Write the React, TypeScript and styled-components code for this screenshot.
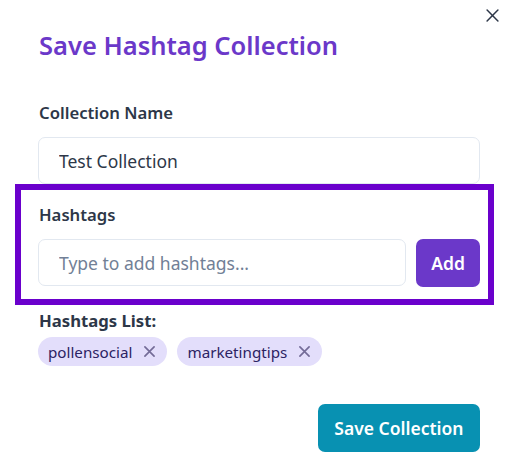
import React from "react";
import styled, { createGlobalStyle } from "styled-components";

const GlobalStyle = createGlobalStyle`
    html, body {
        margin: 0;
        padding: 0;
        background: #ffffff;
    }

    body {
        font-family: "Noto Sans", "Open Sans", sans-serif;
        color: #2d3748;
    }
`;

const Modal = styled.div`
    position: relative;
    width: 513px;
    height: 460px;
    box-sizing: border-box;
    padding: 27px 33px 0 38px;
    display: flex;
    flex-direction: column;
    background: #ffffff;
`;

const CloseButton = styled.button`
    position: absolute;
    top: 3px;
    right: 9px;
    width: 24px;
    height: 24px;
    padding: 0;
    display: flex;
    align-items: center;
    justify-content: center;
    border: none;
    background: transparent;
    color: #2d3748;
    cursor: pointer;
`;

const Title = styled.h2`
    margin: 0 0 39px 1px;
    font-size: 25.5px;
    line-height: 36px;
    font-weight: 600;
    color: #6b38c9;
`;

const Field = styled.div`
    display: flex;
    flex-direction: column;
`;

const Label = styled.label<{ $bold?: boolean }>`
    margin: 0 0 ${props => (props.$bold ? "5px" : "13px")} 1px;
    font-size: 16.7px;
    line-height: 22px;
    font-weight: ${props => (props.$bold ? 700 : 600)};
    color: #2d3748;
`;

const TextInput = styled.input`
    flex: 1 1 auto;
    min-width: 0;
    height: 47px;
    box-sizing: border-box;
    padding: 0 20px;
    border: 1px solid #e2e8f0;
    border-radius: 7px;
    font-family: inherit;
    font-size: 17.5px;
    color: #2d3748;
    background: #ffffff;
    outline: none;

    &::placeholder {
        color: #718096;
    }
`;

const Highlight = styled.section`
    margin: 0 -14px 0 -23px;
    padding: 14px 8px 12px 17px;
    border: 6px solid #6a00cc;
    display: flex;
    flex-direction: column;
`;

const InputRow = styled.div`
    display: flex;
    gap: 10px;
`;

const Button = styled.button<{ $tone: "purple" | "teal" }>`
    height: 48px;
    padding: 0 ${props => (props.$tone === "teal" ? "16.5px" : "15px")};
    border: none;
    border-radius: 7px;
    font-family: inherit;
    font-size: 17.5px;
    font-weight: 600;
    color: #ffffff;
    background: ${props => (props.$tone === "teal" ? "#0891b2" : "#6b38c9")};
    cursor: pointer;
`;

const ListSection = styled.div`
    margin-top: 5px;
    display: flex;
    flex-direction: column;
`;

const Chips = styled.div`
    display: flex;
    flex-wrap: wrap;
    gap: 10px;
`;

const Chip = styled.span`
    height: 29px;
    box-sizing: border-box;
    padding: 0 11px 0 10px;
    display: inline-flex;
    align-items: center;
    gap: 10px;
    border-radius: 15px;
    background: #e3defb;
    color: #2c2363;
    font-size: 15.2px;
`;

const ChipRemove = styled.button`
    width: 14px;
    height: 14px;
    padding: 0;
    display: flex;
    align-items: center;
    justify-content: center;
    border: none;
    background: transparent;
    color: #736b97;
    cursor: pointer;
`;

const Footer = styled.div`
    margin-top: 38px;
    display: flex;
    justify-content: flex-end;
`;

const Cross = ({ size, stroke }: { size: number; stroke: number }) => (
    <svg width={size} height={size} viewBox="0 0 12 12" fill="none">
        <path d="M1 1L11 11M11 1L1 11" stroke="currentColor" strokeWidth={stroke} strokeLinecap="round" />
    </svg>
);

const tags = ["pollensocial", "marketingtips"];

export default function App() {
    return (
        <>
            <GlobalStyle />
            <Modal>
                <CloseButton aria-label="Close">
                    <Cross size={13} stroke={1.4} />
                </CloseButton>
                <Title>Save Hashtag Collection</Title>
                <Field>
                    <Label>Collection Name</Label>
                    <TextInput defaultValue="Test Collection" />
                </Field>
                <Highlight>
                    <Label>Hashtags</Label>
                    <InputRow>
                        <TextInput placeholder="Type to add hashtags..." />
                        <Button $tone="purple">Add</Button>
                    </InputRow>
                </Highlight>
                <ListSection>
                    <Label $bold>Hashtags List:</Label>
                    <Chips>
                        {tags.map(tag => (
                            <Chip key={tag}>
                                {tag}
                                <ChipRemove aria-label={`Remove ${tag}`}>
                                    <Cross size={11} stroke={1.8} />
                                </ChipRemove>
                            </Chip>
                        ))}
                    </Chips>
                </ListSection>
                <Footer>
                    <Button $tone="teal">Save Collection</Button>
                </Footer>
            </Modal>
        </>
    );
}
